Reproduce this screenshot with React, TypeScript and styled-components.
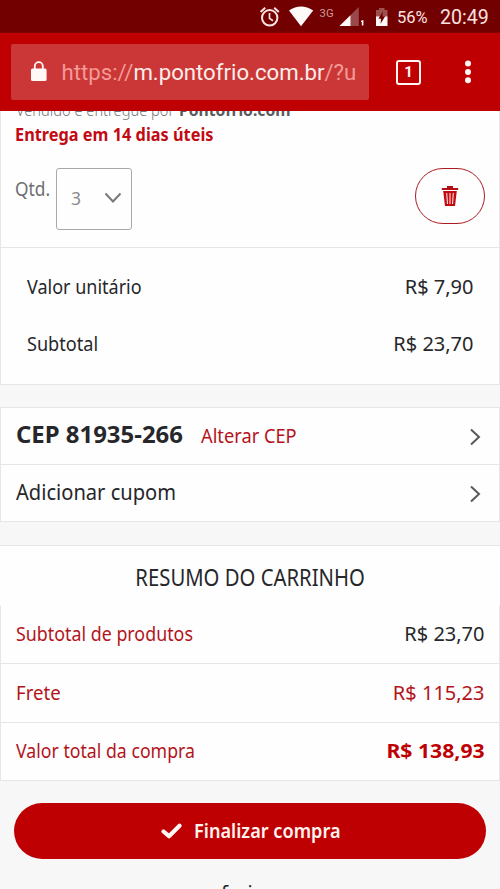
import React from "react";
import styled, { createGlobalStyle } from "styled-components";

const GlobalStyle = createGlobalStyle`
  * { box-sizing: border-box; }
  body { margin: 0; background: #f7f7f7; overflow: hidden; }
`;

const RED = "#bf0003";
const LINK = "#b3141b";
const INK = "#26272a";
const LINE = "#e6e6e6";

const Screen = styled.div`
  width: 500px;
  height: 889px;
  display: flex;
  flex-direction: column;
  overflow: hidden;
  background: #f7f7f7;
  font-family: "Noto Sans", "Open Sans", sans-serif;
  color: ${INK};
`;

const StatusBar = styled.div`
  flex: none;
  height: 33px;
  display: flex;
  align-items: center;
  padding-left: 259px;
  background: linear-gradient(#720000 0, #720000 31px, #860000 33px);
  color: #fbe3e1;
  font-family: Roboto, sans-serif;
`;

const StatusIcons = styled.svg`
  width: 132px;
  height: 33px;
  flex: none;
`;

const Battery = styled.span`
  font-size: 16.5px;
  margin-left: 6px;
  width: 43px;
  padding-top: 2px;
`;

const Clock = styled.span`
  font-size: 19.6px;
  padding-top: 2px;
`;

const BrowserBar = styled.div`
  flex: none;
  height: 78px;
  display: flex;
  align-items: center;
  padding-left: 11px;
  background: ${RED};
`;

const AddressField = styled.div`
  width: 358px;
  height: 56px;
  margin-top: -1px;
  border-radius: 2px;
  background: #ca3736;
  display: flex;
  align-items: center;
  padding-left: 19px;
  font: 22.2px Roboto, sans-serif;
  color: #f49a97;
  white-space: nowrap;
`;

const Address = styled.span`
  margin-left: 13.5px;
  width: 295px;
  overflow: hidden;
`;

const Host = styled.span`
  color: #fdeeec;
`;

const TabCount = styled.div`
  width: 25px;
  height: 25px;
  margin-left: 27px;
  border: 2.5px solid #fff4f2;
  border-radius: 3px;
  color: #fff4f2;
  font: 700 15px/21px Roboto, sans-serif;
  text-align: center;
`;

const MoreIcon = styled.svg`
  width: 8px;
  height: 26px;
  margin-left: 43px;
`;

const Content = styled.main`
  flex: 1;
  min-height: 0;
  overflow: hidden;
`;

const Label = styled.span<{
  $size?: number;
  $fit?: number;
  $weight?: number;
  $color?: string;
  $from?: "left" | "right" | "center";
}>`
  display: inline-block;
  white-space: nowrap;
  font-size: ${(p) => p.$size ?? 20}px;
  font-weight: ${(p) => p.$weight ?? 400};
  color: ${(p) => p.$color ?? INK};
  transform: scaleX(${(p) => p.$fit ?? 1});
  transform-origin: ${(p) => p.$from ?? "left"} center;
`;

const Card = styled.section`
  background: #fefefe;
  border: 1px solid ${LINE};
  margin-bottom: 22px;
`;

const ItemCard = styled(Card)`
  border-top: 0;
`;

const OptionsCard = styled(Card)`
  margin-bottom: 23px;
`;

const Item = styled.div`
  display: flow-root;
  height: 137px;
  border-bottom: 1px solid ${LINE};
  padding: 0 14px;
`;

const Seller = styled.div`
  display: flex;
  height: 20px;
  line-height: 20px;
  margin: -11px 0 0 1px;
`;

const SellerName = styled.div`
  margin-left: -10px;
`;

const Delivery = styled.div`
  height: 24px;
  line-height: 24px;
  margin-top: 2px;
`;

const Quantity = styled.div`
  display: flex;
  align-items: flex-start;
  margin-top: 22px;
`;

const QuantityLabel = styled.div`
  width: 41px;
  height: 41px;
  line-height: 41px;
`;

const Select = styled.div`
  width: 76px;
  height: 62px;
  border: 1px solid #a9a9a9;
  border-radius: 3px;
  display: flex;
  align-items: center;
  justify-content: space-between;
  padding: 0 9px 3px 14px;
`;

const RemoveButton = styled.button`
  width: 70px;
  height: 56px;
  margin: 0 0 0 auto;
  padding: 0;
  border: 1.5px solid #ab1c22;
  border-radius: 28px;
  background: transparent;
  display: flex;
  align-items: center;
  justify-content: center;
`;

const Prices = styled.div`
  padding: 10px 25.5px 12px;
`;

const Row = styled.div<{ $h: number; $pad?: number; $line?: boolean; $shift?: number }>`
  height: ${(p) => p.$h}px;
  display: flex;
  align-items: center;
  justify-content: space-between;
  padding: 0 ${(p) => p.$pad ?? 0}px ${(p) => p.$shift ?? 0}px;
  border-bottom: ${(p) => (p.$line ? `1px solid ${LINE}` : "0")};
`;

const CepGroup = styled.div`
  display: flex;
  align-items: baseline;
  gap: 25px;
`;

const Chevron = styled.svg`
  width: 14px;
  height: 20px;
  margin-right: 3px;
  margin-top: 5px;
`;

const SummaryTitle = styled.h2`
  height: 61px;
  margin: 0;
  padding-top: 2px;
  background: #fefefe;
  border-top: 1px solid ${LINE};
  display: flex;
  align-items: center;
  justify-content: center;
`;

const Summary = styled(Card)`
  border-top: 0;
`;

const CheckoutButton = styled.button`
  width: 472px;
  height: 56px;
  margin: 0 14px;
  padding: 0 0 0 147px;
  border: 0;
  border-radius: 28px;
  background: ${RED};
  display: flex;
  align-items: center;
  font-family: inherit;
`;

const CheckIcon = styled.svg`
  width: 21px;
  height: 16px;
  margin-right: 12px;
`;

const Footnote = styled.div`
  height: 30px;
  padding: 20px 0 0 187px;
`;

const Arrow = () => (
  <Chevron viewBox="0 0 14 20">
    <path d="M3 2.5 L11 10 L3 17.5" fill="none" stroke="#58595b" strokeWidth="2" />
  </Chevron>
);

export default function App() {
  return (
    <Screen>
      <GlobalStyle />
      <StatusBar>
        <StatusIcons viewBox="0 0 132 33">
          <g fill="none" stroke="#fbe3e1" strokeWidth="2">
            <circle cx="10.7" cy="17.8" r="7.7" />
            <path d="M1.6 12 L6.2 7.8 M19.8 12 L15.2 7.8" />
            <path d="M10.5 13 V18.4 L14 20.8" strokeWidth="1.7" />
          </g>
          <path d="M30 10.4 Q42 2.6 54.2 10.4 L42 26.3 Z" fill="#fffafa" />
          <text x="60.6" y="17.2" fontSize="11.3" fontFamily="Roboto" fill="#cf9c9a">3G</text>
          <path d="M99.8 7 V26 H80.5 Z" fill="#99494a" />
          <path d="M91.5 15.2 V26 H80.5 Z" fill="#fffafa" />
          <path d="M102 20.8 L104.4 20 V25.5 H102.8 V22 H102 Z" fill="#fffafa" />
          <path d="M120 8 H125.5 V10 H128.5 V17 H117 V10 H120 Z" fill="#9c5150" />
          <path d="M117 16.5 H128.5 V26 H117 Z" fill="#fffafa" />
          <path d="M123.8 11.5 L119.4 18.8 H122 L121.6 23.8 L126.2 16.3 H123.5 Z" fill="#720000" />
        </StatusIcons>
        <Battery>56%</Battery>
        <Clock>20:49</Clock>
      </StatusBar>
      <BrowserBar>
        <AddressField>
          <svg width="18" height="21" viewBox="0 0 18 21">
            <rect x="1" y="7.5" width="15.6" height="12.5" rx="1.6" fill="#fff8f6" />
            <path d="M4.8 8.5 V5.2 a4 4 0 0 1 8 0 V8.5" fill="none" stroke="#fff8f6" strokeWidth="1.8" />
          </svg>
          <Address>
            https://<Host>m.pontofrio.com.br</Host>/?u
          </Address>
        </AddressField>
        <TabCount>1</TabCount>
        <MoreIcon viewBox="0 0 8 26">
          <circle cx="4" cy="4.4" r="3" fill="#fff4f2" />
          <circle cx="4" cy="12.9" r="3" fill="#fff4f2" />
          <circle cx="4" cy="21.2" r="3" fill="#fff4f2" />
        </MoreIcon>
      </BrowserBar>
      <Content>
        <ItemCard>
          <Item>
            <Seller>
              <Label $size={16} $fit={0.915} $weight={300} $color="#77787a">Vendido e entregue por</Label>
              <SellerName>
                <Label $size={16} $fit={0.98} $weight={700} $color="#5a5b5d">Pontofrio.com</Label>
              </SellerName>
            </Seller>
            <Delivery>
              <Label $size={17.5} $fit={0.932} $weight={700} $color="#c20a12">Entrega em 14 dias úteis</Label>
            </Delivery>
            <Quantity>
              <QuantityLabel>
                <Label $fit={0.865} $color="#6d6e71">Qtd.</Label>
              </QuantityLabel>
              <Select>
                <Label $size={17.5} $color="#8a8b8d">3</Label>
                <svg width="18" height="12" viewBox="0 0 18 12">
                  <path d="M1.5 1.5 L9 9.5 L16.5 1.5" fill="none" stroke="#77787a" strokeWidth="2" />
                </svg>
              </Select>
              <RemoveButton aria-label="Remover">
                <svg width="18" height="22" viewBox="0 0 18 22">
                  <path d="M6 1 H12 V3 H17.2 V5 H0.8 V3 H6 Z" fill="#b01016" />
                  <path d="M2.2 6 H15.8 L14 21 H4 Z" fill="#c20a10" />
                  <path d="M5.7 8 L6.5 19 M9 8 V19 M12.3 8 L11.5 19" stroke="#fbe0e0" strokeWidth="1.1" />
                </svg>
              </RemoveButton>
            </Quantity>
          </Item>
          <Prices>
            <Row $h={57}>
              <Label $fit={0.9}>Valor unitário</Label>
              <Label $from="right">R$ 7,90</Label>
            </Row>
            <Row $h={57}>
              <Label $fit={0.905}>Subtotal</Label>
              <Label $from="right">R$ 23,70</Label>
            </Row>
          </Prices>
        </ItemCard>

        <OptionsCard>
          <Row $h={57} $pad={14.5} $line $shift={4}>
            <CepGroup>
              <Label $size={23} $fit={1.04} $weight={700}>CEP 81935-266</Label>
              <Label $size={20.5} $fit={0.89} $color={LINK}>Alterar CEP</Label>
            </CepGroup>
            <Arrow />
          </Row>
          <Row $h={56} $pad={14.5} $shift={4}>
            <Label $size={22} $fit={0.914}>Adicionar cupom</Label>
            <Arrow />
          </Row>
        </OptionsCard>

        <SummaryTitle>
          <Label $size={23} $fit={0.882} $from="center">RESUMO DO CARRINHO</Label>
        </SummaryTitle>
        <Summary>
          <Row $h={58} $pad={14.5} $line $shift={2}>
            <Label $fit={0.892} $color={LINK}>Subtotal de produtos</Label>
            <Label $from="right">R$ 23,70</Label>
          </Row>
          <Row $h={59} $pad={14.5} $line $shift={2}>
            <Label $fit={0.93} $color={LINK}>Frete</Label>
            <Label $from="right" $color={LINK}>R$ 115,23</Label>
          </Row>
          <Row $h={57} $pad={14.5} $shift={2}>
            <Label $fit={0.885} $color={LINK}>Valor total da compra</Label>
            <Label $fit={1.06} $weight={700} $from="right" $color={RED}>R$ 138,93</Label>
          </Row>
        </Summary>

        <CheckoutButton>
          <CheckIcon viewBox="0 0 21 16">
            <path d="M2.5 8.5 L8 13.2 L18.5 2.7" fill="none" stroke="#fff8f4" strokeWidth="4.2" strokeLinecap="round" strokeLinejoin="round" />
          </CheckIcon>
          <Label $size={19} $fit={0.955} $weight={600} $color="#fff4ee">Finalizar compra</Label>
        </CheckoutButton>
        <Footnote>
          <Label>conferir</Label>
        </Footnote>
      </Content>
    </Screen>
  );
}
